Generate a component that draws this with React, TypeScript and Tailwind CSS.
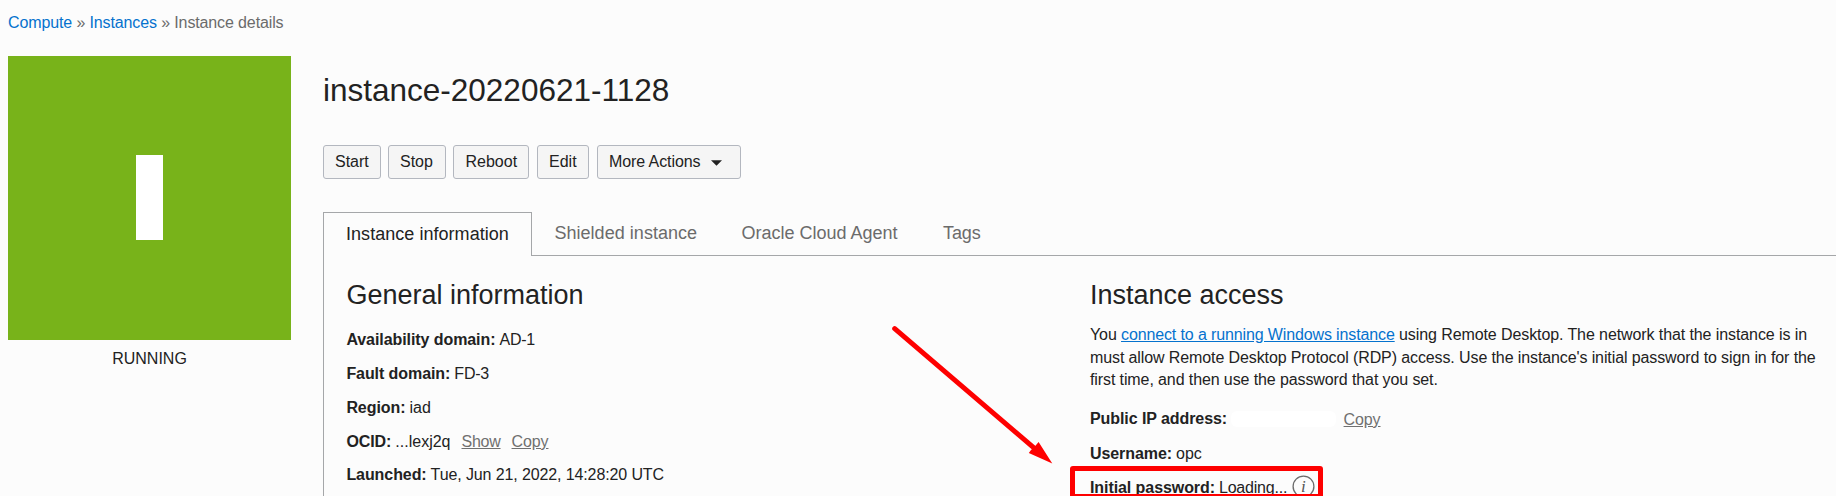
import React from "react";

function Field({ label, children, className = "" }: { label: string; children?: React.ReactNode; className?: string }) {
  return (
    <div className={`whitespace-pre leading-5 ${className}`}>
      <span className="font-bold tracking-[-0.075px]">{label}</span>
      <span className="inline-block w-1" />
      {children}
    </div>
  );
}

function Action({ children, className }: { children: React.ReactNode; className: string }) {
  return (
    <button className={`flex h-[34px] shrink-0 items-center rounded-[3px] border border-[#b3b7bf] bg-[#f5f5f5] pl-[11px] ${className}`}>
      {children}
    </button>
  );
}

export default function App() {
  return (
    <div className="relative flex h-[496px] w-[1836px] flex-col overflow-hidden bg-[#fcfcfc] pl-2 pt-[13px] font-['Liberation_Sans',Arial,sans-serif] text-base text-[#222]">
      <nav className="h-[43px] whitespace-pre leading-5 tracking-[-0.124px] text-[#6b6b6b]">
        <a className="text-[#0572ce]">Compute</a> » <a className="text-[#0572ce]">Instances</a> » <span>Instance details</span>
      </nav>
      <div className="flex">
        <aside className="w-[283px] shrink-0">
          <div className="flex h-[284px] justify-center bg-[#78b31a] pt-[99px]">
            <div className="h-[85px] w-[27px] bg-white" />
          </div>
          <div className="mt-[9px] text-center leading-5">RUNNING</div>
        </aside>
        <main className="ml-8 flex grow flex-col">
          <h1 className="mt-4 h-[73px] text-[31.5px] leading-9">instance-20220621-1128</h1>
          <div className="flex">
            <Action className="w-[58px]">Start</Action>
            <Action className="ml-[7px] w-[58px]">Stop</Action>
            <Action className="ml-[7px] w-[76px]"><span className="ml-[0.5px]">Reboot</span></Action>
            <Action className="ml-2 w-[52px]">Edit</Action>
            <Action className="ml-2 w-36">
              <span className="tracking-[-0.09px]">More Actions</span>
              <svg className="ml-[11px] mt-px h-[6px] w-[11px]" viewBox="0 0 11 6">
                <path d="M0 0.3H11L5.5 5.8Z" fill="#222" />
              </svg>
            </Action>
          </div>
          <div className="mt-[33px] flex h-11 text-lg leading-6 text-[#6b6b6b]">
            <div className="w-[209px] border border-b-0 border-[#a5a7a9] pl-[22px] pt-[9px] tracking-[0.04px] text-[#222]">Instance information</div>
            <div className="flex grow border-b border-[#a5a7a9] pt-[9px]">
              <span className="ml-[22.4px] w-[187px] tracking-[0.04px]">Shielded instance</span>
              <span className="w-[201.6px]">Oracle Cloud Agent</span>
              <span className="tracking-[-0.1px]">Tags</span>
            </div>
          </div>
          <div className="flex h-60 border-l border-[#a5a7a9] pl-[22.4px]">
            <section className="w-[743.6px] shrink-0">
              <h2 className="mt-[23px] text-[27px] leading-8">General information</h2>
              <div className="mt-[19px] flex flex-col gap-[14px]">
                <Field label="Availability domain:"><span className="tracking-[-0.25px]">AD-1</span></Field>
                <Field label="Fault domain:"><span className="tracking-[-0.2px]">FD-3</span></Field>
                <Field label="Region:">iad</Field>
                <Field label="OCID:">
                  ...lexj2q
                  <a className="ml-[11px] tracking-[-0.25px] text-[#707070] underline">Show</a>
                  <a className="ml-[11px] tracking-[-0.1px] text-[#707070] underline">Copy</a>
                </Field>
                <Field label="Launched:" className="-mt-px"><span className="tracking-[-0.115px]">Tue, Jun 21, 2022, 14:28:20 UTC</span></Field>
              </div>
            </section>
            <section>
              <h2 className="mt-[23px] text-[27px] leading-8">Instance access</h2>
              <p className="mt-[13px] whitespace-pre leading-[22.6px] tracking-[-0.1px]">
                You <a className="tracking-[-0.128px] text-[#0572ce] underline">connect to a running Windows instance</a>
                <span className="tracking-[-0.094px]"> using Remote Desktop. The network that the instance is in</span><br />
                <span className="tracking-[-0.108px]">must allow Remote Desktop Protocol (RDP) access. Use the instance's initial password to sign in for the</span><br />
                <span className="tracking-[-0.104px]">first time, and then use the password that you set.</span>
              </p>
              <div className="mt-[17.2px] flex h-5 items-center">
                <Field label="Public IP address:" className="tracking-[-0.1px]" />
                <span className="h-4 w-[105px] rounded-md bg-white" />
                <a className="ml-[7.5px] mt-[2px] leading-5 tracking-[-0.1px] text-[#707070] underline">Copy</a>
              </div>
              <Field label="Username:" className="mt-[15px]">opc</Field>
              <div className="mt-[14px] flex h-5 items-center">
                <Field label="Initial password:"><span className="tracking-[-0.2px]">Loading...</span></Field>
                <svg className="-mt-[2px] ml-[4.5px] h-[23px] w-[23px] shrink-0" viewBox="0 0 23 23">
                  <circle cx="11.5" cy="11.5" r="10.4" fill="none" stroke="#6b6b6b" strokeWidth="1.3" />
                  <text x="11.3" y="17" textAnchor="middle" fontSize="17" fontStyle="italic" fontFamily="Liberation Serif, serif" fill="#555">i</text>
                </svg>
              </div>
            </section>
          </div>
        </main>
      </div>
      <div className="absolute left-[1070px] top-[466px] h-[33px] w-[253px] rounded-[3px] border-[5px] border-[#fe0000]" />
      <svg className="absolute left-[890px] top-[324px] h-[142px] w-[166px]" viewBox="890 324 166 142">
        <path d="M894.7 328.6L1036 449.7" stroke="#fe0000" strokeWidth="5" strokeLinecap="round" />
        <path d="M1052.3 463.5L1038.6 442L1034.8 446.5L1031 450L1028.8 453Z" fill="#fe0000" />
      </svg>
    </div>
  );
}
